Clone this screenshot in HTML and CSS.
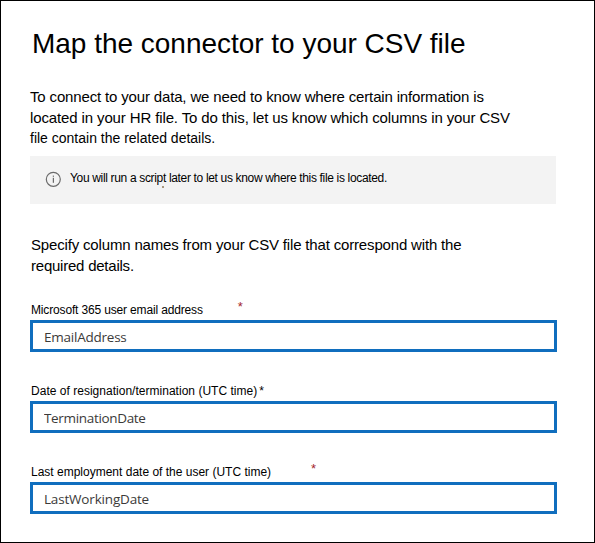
FILE: index.html
```html
<!DOCTYPE html>
<html lang="en">
<head>
<meta charset="utf-8">
<title>Map the connector to your CSV file</title>
<link rel="stylesheet" href="styles.css">
</head>
<body>
<main class="panel">
  <h1 class="title">Map the connector to your CSV file</h1>
  <p class="intro">
    <span class="line intro-a">To connect to your data, we need to know where certain information is</span>
    <span class="line intro-b">located in your HR file. To do this, let us know which columns in your CSV</span>
    <span class="line intro-c">file contain the related details.</span>
  </p>
  <div class="notice">
    <svg class="info" viewBox="0 0 16 16" width="16" height="16" aria-hidden="true">
      <circle cx="8.3" cy="8.3" r="7" fill="none" stroke="#6b6b6b" stroke-width="1.2"/>
      <rect x="7.8" y="6.8" width="1.1" height="5" fill="#5c5c5c"/>
      <rect x="7.8" y="4.6" width="1.1" height="1.2" fill="#5c5c5c"/>
    </svg>
    <span class="notice-text">You will run a script later to let us know where this file is located.</span>
  </div>
  <p class="specify">
    <span class="line specify-a">Specify column names from your CSV file that correspond with the</span>
    <span class="line specify-b">required details.</span>
  </p>
  <form class="fields">
    <div class="field">
      <label class="label" for="email"><span class="label-a">Microsoft 365 user email address</span><span class="star star-a">*</span></label>
      <input class="input input-a" id="email" value="EmailAddress">
    </div>
    <div class="field">
      <label class="label" for="term"><span class="label-b">Date of resignation/termination (UTC time)</span><span class="star star-b">*</span></label>
      <input class="input input-b" id="term" value="TerminationDate">
    </div>
    <div class="field">
      <label class="label" for="last"><span class="label-c">Last employment date of the user (UTC time)</span><span class="star star-c">*</span></label>
      <input class="input input-c" id="last" value="LastWorkingDate">
    </div>
  </form>
</main>
</body>
</html>
```
FILE: styles.css
```css
* { box-sizing: border-box; }
body { margin: 0; background: #fff; }
.panel {
  width: 595px;
  height: 543px;
  border: 1px solid #000;
  padding: 25px 37px 0 29px;
  font-family: "Liberation Sans", Arial, sans-serif;
  color: #000;
  overflow: hidden;
}
.title {
  margin: 0 0 25px 2px;
  font-size: 28px;
  font-weight: 400;
  line-height: 36px;
  letter-spacing: -0.02px;
  white-space: nowrap;
}
.intro, .specify {
  margin: 0;
  font-size: 15px;
  line-height: 20.5px;
}
.line { display: block; width: max-content; white-space: nowrap; }
.intro-a { letter-spacing: -0.155px; }
.intro-b { letter-spacing: -0.125px; }
.intro-c { font-size: 14px; }
.notice {
  display: flex;
  align-items: flex-start;
  gap: 9px;
  width: 526px;
  height: 48px;
  margin-top: 7px;
  padding: 15px 0 0 15px;
  background: #f3f3f3;
}
.notice-text {
  position: relative;
  font-size: 12px;
  line-height: 14px;
  letter-spacing: -0.335px;
  white-space: nowrap;
}
.notice-text::after {
  content: "";
  position: absolute;
  left: 92px;
  top: 15px;
  width: 2px;
  height: 2px;
  background: #a8977f;
}
.specify { margin-top: 30px; line-height: 21px; padding-left: 1px; }
.specify-a { letter-spacing: -0.165px; }
.specify-b { letter-spacing: -0.23px; }
.fields { margin-top: 26px; }
.field { height: 81px; }
.label {
  display: flex;
  height: 18px;
  padding-left: 1px;
  font-size: 12px;
  line-height: 16px;
  white-space: nowrap;
}
.label-a { letter-spacing: -0.155px; }
.label-b { letter-spacing: 0.02px; }
.star-a, .star-c { margin-top: -3px; font-size: 13px; color: #a4262c; }
.star-a { margin-left: 35px; }
.star-b { margin-left: 2px; }
.star-c { margin-left: 40px; }
.input {
  display: block;
  width: 527px;
  height: 32px;
  margin: 0;
  padding: 2px 11px 0;
  border: 3px solid #106ebe;
  border-radius: 0;
  background: #fff;
  outline: 0;
  font-family: "Open Sans", "Noto Sans", sans-serif;
  font-size: 13.5px;
  letter-spacing: -0.23px;
  color: #3b3a39;
}
.input-b { letter-spacing: -0.33px; }
.input-c { letter-spacing: -0.18px; }
```
